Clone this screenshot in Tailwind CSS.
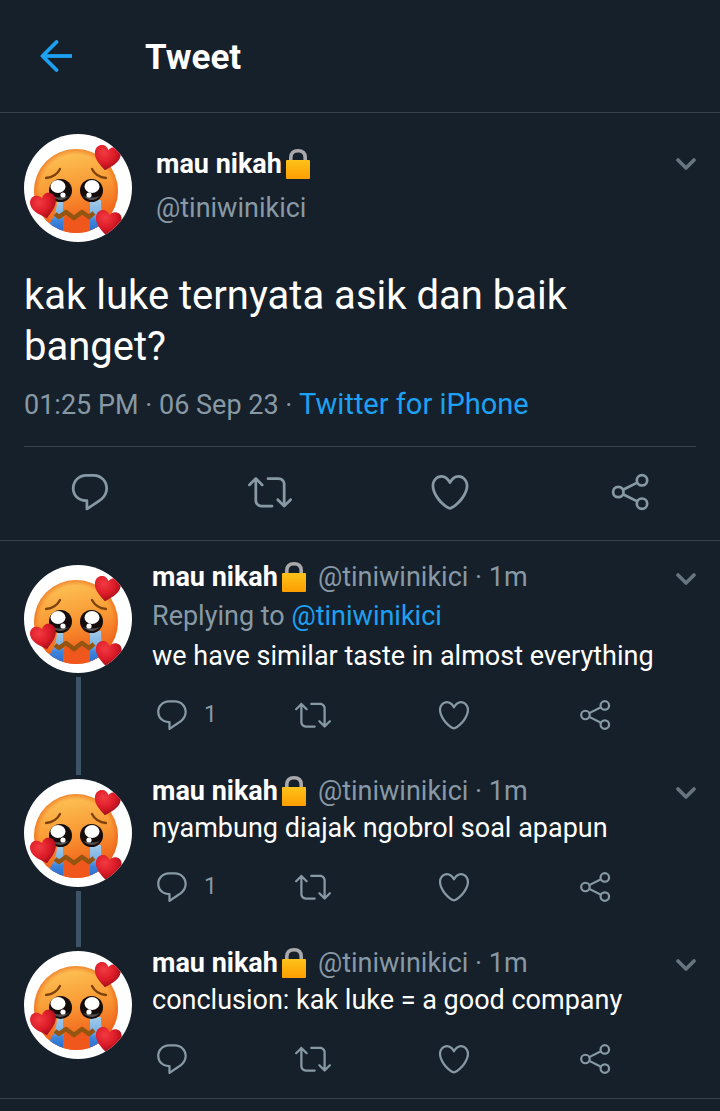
<!DOCTYPE html>
<html lang="id">
<head>
  <meta charset="UTF-8">
  <title>Tweet</title>
  <meta name="viewport" content="width=device-width, initial-scale=1.0">
  <script src="https://cdn.jsdelivr.net/npm/@tailwindcss/browser@4"></script>
</head>
<body class="min-h-screen bg-[#16202a] font-['Roboto',sans-serif] text-white">

  <!-- Shared icons -->
  <svg class="absolute size-0" aria-hidden="true">
    <defs>
      <linearGradient id="face" x1="0.4" y1="0" x2="0.6" y2="1">
        <stop offset="0" stop-color="#fdc456" />
        <stop offset="0.45" stop-color="#f99a35" />
        <stop offset="1" stop-color="#ee4f12" />
      </linearGradient>
      <radialGradient id="edge" cx="0.5" cy="0.5" r="0.5">
        <stop offset="0.86" stop-color="#ee6a1c" stop-opacity="0" />
        <stop offset="1" stop-color="#e8601a" stop-opacity="0.6" />
      </radialGradient>
      <radialGradient id="love" cx="0.35" cy="0.3" r="0.75">
        <stop offset="0" stop-color="#f23a42" />
        <stop offset="0.55" stop-color="#dc1c28" />
        <stop offset="1" stop-color="#9c0c1a" />
      </radialGradient>
      <linearGradient id="tear" x1="0" y1="0" x2="0" y2="1">
        <stop offset="0" stop-color="#a4cbe8" />
        <stop offset="0.4" stop-color="#7db4e6" />
        <stop offset="0.6" stop-color="#3f86dc" />
        <stop offset="1" stop-color="#2468cc" />
      </linearGradient>
      <linearGradient id="gold" x1="0" y1="0" x2="0" y2="1">
        <stop offset="0" stop-color="#fdc21a" />
        <stop offset="1" stop-color="#fd9e02" />
      </linearGradient>
      <clipPath id="round"><circle cx="54" cy="54" r="54" /></clipPath>
      <clipPath id="head"><circle cx="52" cy="57" r="42" /></clipPath>
    </defs>

    <symbol id="heart-shape" viewBox="0 0 28 26">
      <path fill="url(#love)" d="M14 25.500C10 22 1 16.500 1 8.500C1 4 4 1 7.800 1C10.500 1 12.800 2.500 14 5C15.200 2.500 17.500 1 20.200 1C24 1 27 4 27 8.500C27 16.500 18 22 14 25.500Z" />
    </symbol>

    <symbol id="avatar" viewBox="0 0 108 108">
      <g clip-path="url(#round)">
        <rect width="108" height="108" fill="#fff" />
        <circle cx="52" cy="57" r="42" fill="url(#face)" />
        <circle cx="52" cy="57" r="42" fill="url(#edge)" />
        <g clip-path="url(#head)">
          <path fill="url(#tear)" d="M33 66H39V100H22C24 88 33 84 33 66ZM66 66H77C77 80 80 92 82 100H66Z" />
        </g>
        <path fill="#f0571c" d="M39 85L43 80L50 86L58 80L66 85V97Q52 101 39 97Z" />
        <path fill="none" stroke="#93550f" stroke-width="4.500" stroke-linejoin="round" d="M31 80L35 83L42 78L50 84L58 78L65 83L70 79" />
        <g fill="none" stroke="#7e430c" stroke-width="2.400" stroke-linecap="round">
          <path d="M22 44Q32 43 36 35" />
          <path d="M68 35Q72 43 82 44" />
        </g>
        <g fill="#140d0b">
          <circle cx="36.500" cy="56.500" r="11.500" />
          <circle cx="67.500" cy="56.500" r="11.500" />
        </g>
        <g fill="#54504f">
          <path d="M28 62Q36 70 45 62Q37 65 28 62ZM59 62Q68 70 76 62Q68 65 59 62Z" />
        </g>
        <g fill="#fff">
          <ellipse cx="34" cy="52.500" rx="7.500" ry="6.500" />
          <ellipse cx="68" cy="52.500" rx="7.500" ry="6.500" />
          <circle cx="39" cy="61" r="2.600" />
          <circle cx="65" cy="61" r="2.600" />
        </g>
        <use href="#heart-shape" x="69" y="11" width="28" height="26" transform="rotate(10 83 24)" />
        <use href="#heart-shape" x="6" y="59" width="28" height="26" transform="rotate(-14 20 72)" />
        <use href="#heart-shape" x="70" y="76" width="28" height="26" transform="rotate(10 84 89)" />
      </g>
    </symbol>

    <symbol id="lock" viewBox="0 0 24 30">
      <path fill="none" stroke="#a9a9ab" stroke-width="3.600" d="M4.800 13V8.500Q4.800 1.800 12 1.800Q19.200 1.800 19.200 8.500V13" />
      <rect y="11" width="24" height="19" rx="1" fill="url(#gold)" />
    </symbol>

    <symbol id="chevron" viewBox="0 0 20 12">
      <path fill="none" stroke="currentColor" stroke-width="3.600" stroke-linecap="round" stroke-linejoin="round" d="M2 2L10 10L18 2" />
    </symbol>

    <symbol id="reply" viewBox="0 0 24 24">
      <path fill="currentColor" d="M14.046 2.242l-4.148-.01h-.002c-4.374 0-7.800 3.427-7.800 7.802 0 4.098 3.186 7.206 7.465 7.370v3.828c0 .108.044.286.120.403.142.225.384.347.632.347.138 0 .277-.038.402-.118.264-.168 6.473-4.140 8.088-5.506 1.902-1.610 3.040-3.970 3.043-6.312v-.017c-.006-4.367-3.430-7.787-7.800-7.788zm3.787 12.972c-1.134.960-4.862 3.405-6.772 4.643V16.670c0-.414-.335-.750-.750-.750h-.396c-3.660 0-6.318-2.476-6.318-5.886 0-3.534 2.768-6.302 6.300-6.302l4.147.010h.002c3.532 0 6.300 2.766 6.302 6.296-.003 1.910-.942 3.844-2.514 5.176z" />
    </symbol>

    <symbol id="retweet" viewBox="0 0 24 24">
      <path fill="currentColor" d="M23.770 15.670c-.292-.293-.767-.293-1.060 0l-2.220 2.220V7.650c0-2.068-1.683-3.750-3.750-3.750h-5.850c-.414 0-.750.336-.750.750s.336.750.750.750h5.850c1.240 0 2.250 1.010 2.250 2.250v10.240l-2.220-2.220c-.293-.293-.768-.293-1.060 0s-.294.768 0 1.060l3.500 3.500c.145.147.337.220.530.220s.383-.072.530-.220l3.500-3.500c.294-.292.294-.767 0-1.060zm-10.660 3.280H7.260c-1.240 0-2.250-1.010-2.250-2.250V6.460l2.220 2.220c.148.147.340.220.532.220s.384-.073.530-.220c.293-.293.293-.768 0-1.060l-3.500-3.500c-.293-.294-.768-.294-1.060 0l-3.500 3.500c-.294.292-.294.767 0 1.060s.767.293 1.060 0l2.220-2.220V16.700c0 2.068 1.683 3.750 3.750 3.750h5.850c.414 0 .750-.336.750-.750s-.337-.750-.750-.750z" />
    </symbol>

    <symbol id="like" viewBox="0 0 24 24">
      <path fill="currentColor" d="M12 21.638h-.014C9.403 21.590 1.950 14.856 1.950 8.478c0-3.064 2.525-5.754 5.403-5.754 2.290 0 3.830 1.580 4.646 2.730.814-1.148 2.354-2.730 4.645-2.730 2.880 0 5.404 2.690 5.404 5.755 0 6.376-7.454 13.110-10.037 13.157H12zM7.354 4.225c-2.080 0-3.903 1.988-3.903 4.255 0 5.740 7.034 11.596 8.550 11.658 1.518-.062 8.550-5.917 8.550-11.658 0-2.267-1.823-4.255-3.903-4.255-2.528 0-3.940 2.936-3.952 2.965-.230.562-1.156.562-1.387 0-.014-.030-1.425-2.965-3.954-2.965z" />
    </symbol>

    <symbol id="share" viewBox="0 0 44 44">
      <g fill="none" stroke="currentColor" stroke-width="2.700">
        <circle cx="10.300" cy="22" r="5.200" />
        <circle cx="34" cy="10.300" r="5.200" />
        <circle cx="34" cy="33.700" r="5.200" />
        <path d="M15 19.700L29.300 12.600M15 24.300L29.300 31.400" />
      </g>
    </symbol>
  </svg>

  <!-- Top bar -->
  <header class="flex h-[113px] items-center border-b border-[#38444d] px-10">
    <a href="#" aria-label="Back" class="text-[#1da1f2]">
      <svg class="size-8" viewBox="0 0 32 32" fill="none" stroke="currentColor" stroke-width="3.800">
        <path d="M2 16H32" />
        <path stroke-linecap="round" stroke-linejoin="round" d="M16.500 2L2.500 16L16.500 30" />
      </svg>
    </a>
    <h1 class="ml-[73px] pt-1 text-[35px] leading-10 font-bold">Tweet</h1>
  </header>

  <main>
    <!-- Main tweet -->
    <article class="border-b border-[#38444d]">
      <div class="px-6 pt-[21px]">
        <div class="flex gap-6">
          <svg class="size-[108px] shrink-0" role="img" aria-label="Avatar"><use href="#avatar" /></svg>
          <div class="flex-1 pt-2">
            <div class="flex h-11 items-center gap-1">
              <span class="text-[27px] leading-8 font-bold">mau nikah</span>
              <svg class="h-[30px] w-6"><use href="#lock" /></svg>
            </div>
            <a href="#" class="block text-[27px] leading-11 text-[#8899a6]">@tiniwinikici</a>
          </div>
          <button aria-label="More" class="mt-6 h-3 text-[#66757f]"><svg class="h-3 w-5"><use href="#chevron" /></svg></button>
        </div>
        <p class="mt-7 text-[40px] leading-[51px]">kak luke ternyata asik dan baik banget?</p>
        <p class="mt-4 border-b border-[#38444d] pb-[25px] text-[27px] leading-8 text-[#8899a6]">01:25 PM · 06 Sep 23 · <a href="#" class="text-[29px] text-[#1da1f2]">Twitter for iPhone</a></p>
      </div>
      <div class="grid h-[93px] grid-cols-4 place-items-center pb-1 text-[#8899a6]">
        <button aria-label="Reply"><svg class="size-11"><use href="#reply" /></svg></button>
        <button aria-label="Retweet"><svg class="size-11"><use href="#retweet" /></svg></button>
        <button aria-label="Like"><svg class="size-11"><use href="#like" /></svg></button>
        <button aria-label="Share"><svg class="size-11"><use href="#share" /></svg></button>
      </div>
    </article>

    <!-- Replies -->
    <section class="border-b border-[#38444d] pt-5">
      <article class="flex gap-5 px-6">
        <div class="flex flex-col items-center pt-1">
          <svg class="size-[108px] shrink-0" role="img" aria-label="Avatar"><use href="#avatar" /></svg>
          <div class="mt-1 w-[5px] flex-1 bg-[#3d5466]"></div>
        </div>
        <div class="flex-1 pb-[42px]">
          <div class="flex h-8 items-center text-[27px]">
            <span class="font-bold">mau nikah</span>
            <svg class="ml-1 h-[30px] w-6"><use href="#lock" /></svg>
            <span class="ml-3 text-[#8899a6]">@tiniwinikici · 1m</span>
            <button aria-label="More" class="mt-1 ml-auto h-3 text-[#66757f]"><svg class="h-3 w-5"><use href="#chevron" /></svg></button>
          </div>
          <p class="mt-1 text-[27px] leading-[38px] text-[#8899a6]">Replying to <a href="#" class="text-[#1da1f2]">@tiniwinikici</a></p>
          <p class="text-[27px] leading-[42px]">we have similar taste in almost everything</p>
          <div class="mt-5 -mr-[22px] grid grid-cols-4 pl-0.5 text-[#8899a6]">
            <button aria-label="Reply" class="flex items-center gap-3.5 text-[23px]"><svg class="size-9"><use href="#reply" /></svg>1</button>
            <button aria-label="Retweet"><svg class="size-9"><use href="#retweet" /></svg></button>
            <button aria-label="Like"><svg class="size-9"><use href="#like" /></svg></button>
            <button aria-label="Share"><svg class="size-9"><use href="#share" /></svg></button>
          </div>
        </div>
      </article>

      <article class="flex gap-5 px-6">
        <div class="flex flex-col items-center pt-1">
          <svg class="size-[108px] shrink-0" role="img" aria-label="Avatar"><use href="#avatar" /></svg>
          <div class="mt-1 w-[5px] flex-1 bg-[#3d5466]"></div>
        </div>
        <div class="flex-1 pb-[42px]">
          <div class="flex h-8 items-center text-[27px]">
            <span class="font-bold">mau nikah</span>
            <svg class="ml-1 h-[30px] w-6"><use href="#lock" /></svg>
            <span class="ml-3 text-[#8899a6]">@tiniwinikici · 1m</span>
            <button aria-label="More" class="mt-1 ml-auto h-3 text-[#66757f]"><svg class="h-3 w-5"><use href="#chevron" /></svg></button>
          </div>
          <p class="text-[27px] leading-[42px]">nyambung diajak ngobrol soal apapun</p>
          <div class="mt-5 -mr-[22px] grid grid-cols-4 pl-0.5 text-[#8899a6]">
            <button aria-label="Reply" class="flex items-center gap-3.5 text-[23px]"><svg class="size-9"><use href="#reply" /></svg>1</button>
            <button aria-label="Retweet"><svg class="size-9"><use href="#retweet" /></svg></button>
            <button aria-label="Like"><svg class="size-9"><use href="#like" /></svg></button>
            <button aria-label="Share"><svg class="size-9"><use href="#share" /></svg></button>
          </div>
        </div>
      </article>

      <article class="flex gap-5 px-6">
        <div class="pt-1">
          <svg class="size-[108px] shrink-0" role="img" aria-label="Avatar"><use href="#avatar" /></svg>
        </div>
        <div class="flex-1 pb-[21px]">
          <div class="flex h-8 items-center text-[27px]">
            <span class="font-bold">mau nikah</span>
            <svg class="ml-1 h-[30px] w-6"><use href="#lock" /></svg>
            <span class="ml-3 text-[#8899a6]">@tiniwinikici · 1m</span>
            <button aria-label="More" class="mt-1 ml-auto h-3 text-[#66757f]"><svg class="h-3 w-5"><use href="#chevron" /></svg></button>
          </div>
          <p class="text-[27px] leading-[42px]">conclusion: kak luke = a good company</p>
          <div class="mt-5 -mr-[22px] grid grid-cols-4 pl-0.5 text-[#8899a6]">
            <button aria-label="Reply"><svg class="size-9"><use href="#reply" /></svg></button>
            <button aria-label="Retweet"><svg class="size-9"><use href="#retweet" /></svg></button>
            <button aria-label="Like"><svg class="size-9"><use href="#like" /></svg></button>
            <button aria-label="Share"><svg class="size-9"><use href="#share" /></svg></button>
          </div>
        </div>
      </article>
    </section>
  </main>

</body>
</html>
